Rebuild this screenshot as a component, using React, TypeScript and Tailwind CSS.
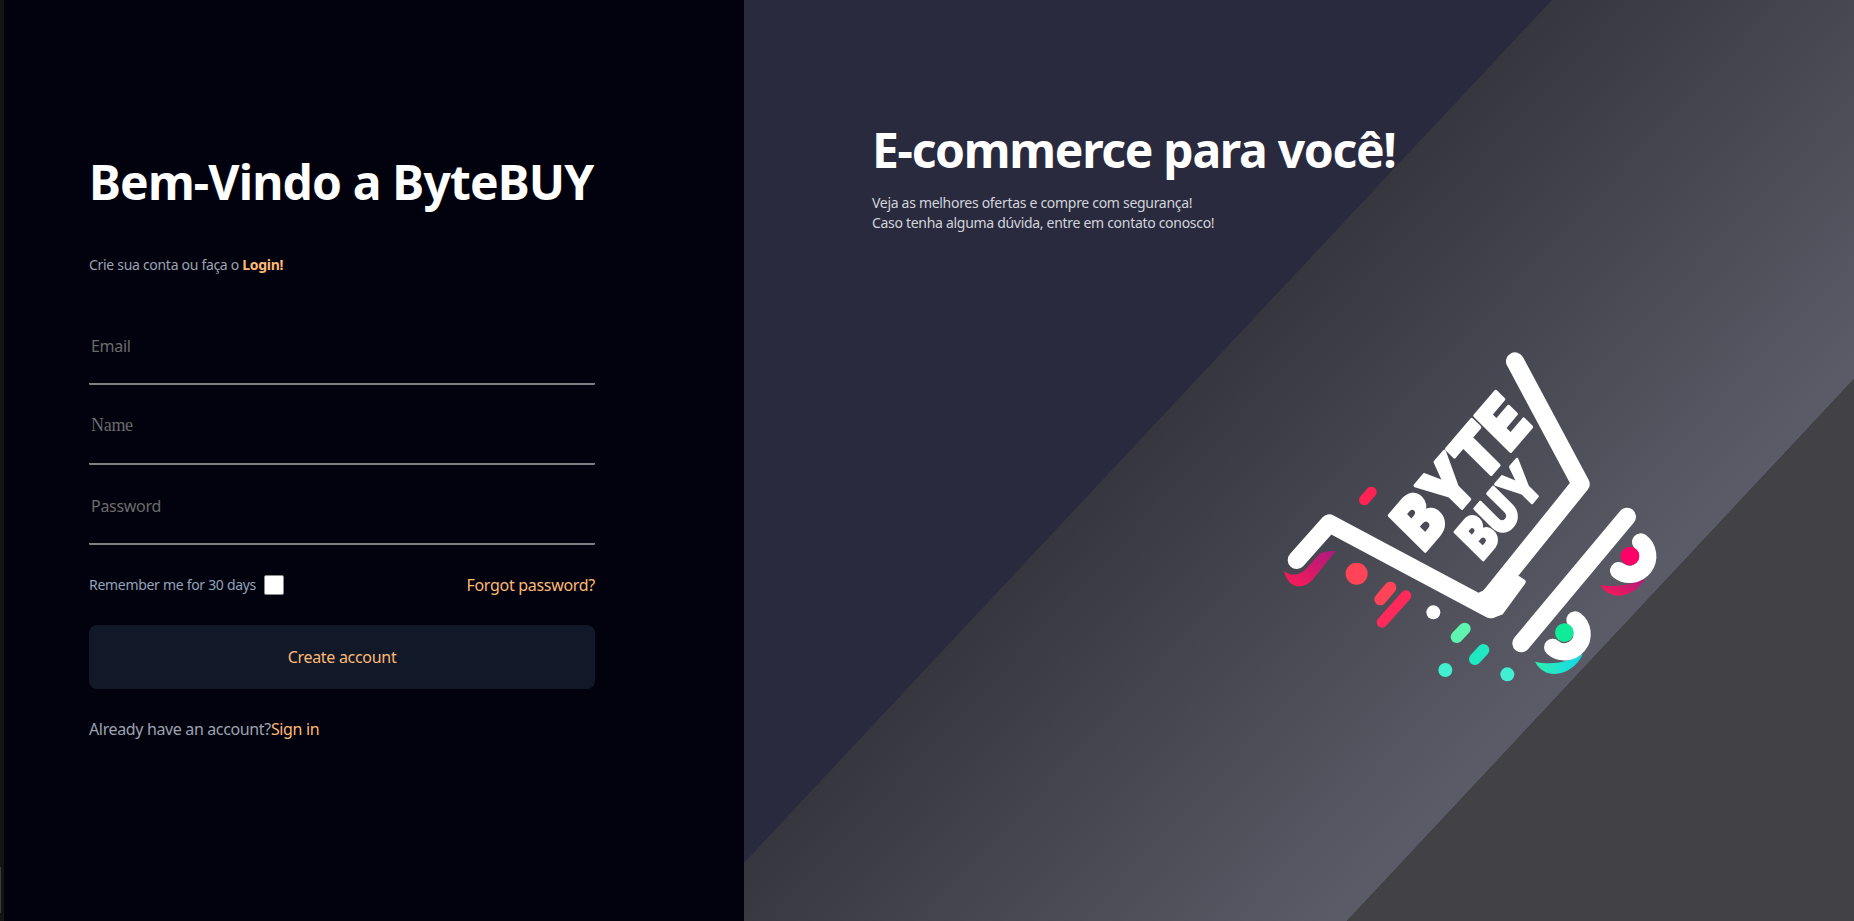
import { Fragment } from 'react';

const fields = [
  { label: 'Email', type: 'email', font: "text-base font-['Noto_Sans',sans-serif]" },
  { label: 'Name', type: 'text', font: "text-[18px] font-['Liberation_Serif',serif]" },
  { label: 'Password', type: 'password', font: "text-base font-['Noto_Sans',sans-serif]" },
];

function Backdrop() {
  return (
    <svg className="absolute inset-0 h-full w-full" viewBox="0 0 1110 921" preserveAspectRatio="none">
      <defs>
        <linearGradient id="band" gradientUnits="userSpaceOnUse" x1="404" y1="431" x2="745" y2="750">
          <stop offset="0" stopColor="#36363f" />
          <stop offset="1" stopColor="#5b5b67" />
        </linearGradient>
      </defs>
      <rect width="1110" height="921" fill="#2a2a3e" />
      <polygon points="808,0 1110,0 1110,379 603,921 0,921 0,863" fill="url(#band)" />
      <polygon points="1110,379 1110,921 603,921" fill="#424145" />
    </svg>
  );
}

// drawn in 3x coordinates, same as the crop it was traced from
function Logo() {
  return (
    <svg className="relative block h-[370px] w-[420px]" viewBox="0 0 1260 1110">
      <defs>
        <linearGradient id="pinkCurl" x1="0" y1="1" x2="1" y2="0">
          <stop offset="0" stopColor="#ff1a55" />
          <stop offset="1" stopColor="#a81a80" />
        </linearGradient>
        <linearGradient id="tealCurl" x1="0" y1="0" x2="1" y2="0">
          <stop offset="0" stopColor="#2ff0b0" />
          <stop offset="1" stopColor="#12d8ea" />
        </linearGradient>
      </defs>

      <path d="M72 722 C90 738 115 738 135 720 L180 670 Q200 662 228 662 L165 740 C135 782 85 780 72 722 Z" fill="url(#pinkCurl)" />
      <path d="M1020 765 C1060 772 1110 768 1156 745 C1135 790 1060 825 1020 765 Z" fill="url(#pinkCurl)" />
      <path d="M825 995 C870 1005 920 1000 968 972 C945 1030 860 1060 825 995 Z" fill="url(#tealCurl)" />

      <g fill="none" stroke="#ffffff" strokeLinecap="round" strokeLinejoin="round">
        <path d="M110 690 L208 580 L692 838" strokeWidth="54" />
        <path d="M765 94 L962 462 L690 800" strokeWidth="54" />
        <path d="M1101 560 L784 940" strokeWidth="54" />
        <path d="M1142 636 A53 53 0 1 1 1076 722" strokeWidth="52" />
        <path d="M945 870 A53 53 0 1 1 878 952" strokeWidth="52" />
      </g>
      <polygon
        points="662,795 772,746 788,756 722,846 700,854"
        fill="#ffffff"
        stroke="#ffffff"
        strokeWidth="18"
        strokeLinejoin="round"
      />

      <circle cx="1110" cy="678" r="28" fill="#ff0066" />
      <circle cx="913" cy="908" r="28" fill="#10eb9a" />
      <circle cx="290" cy="731" r="33" fill="#ff4458" />
      <circle cx="520" cy="847" r="21" fill="#ffffff" />
      <circle cx="556" cy="1020" r="21" fill="#40f0d0" />
      <circle cx="742" cy="1033" r="21" fill="#40f0d0" />

      <g fill="none" strokeLinecap="round">
        <path d="M313 510 L334 486" stroke="#ff2255" strokeWidth="32" />
        <path d="M361 808 L391 773" stroke="#ff4458" strokeWidth="36" />
        <path d="M366 877 L438 797" stroke="#ff2a5a" strokeWidth="32" />
        <path d="M590 921 L614 896" stroke="#5ff5b0" strokeWidth="36" />
        <path d="M645 987 L670 960" stroke="#20e8c0" strokeWidth="36" />
      </g>

      <text
        transform="matrix(0.65 -0.76 0.71 0.70 490 670)"
        textLength="507"
        lengthAdjust="spacingAndGlyphs"
        fontSize="208"
        fontWeight="900"
        fill="#ffffff"
        stroke="#ffffff"
        strokeWidth="10"
        strokeLinejoin="round"
        fontFamily="Inter, sans-serif"
      >
        BYTE
      </text>
      <text
        transform="matrix(0.65 -0.76 0.71 0.70 665 695)"
        textLength="298"
        lengthAdjust="spacingAndGlyphs"
        fontSize="165"
        fontWeight="900"
        fill="#ffffff"
        stroke="#ffffff"
        strokeWidth="8"
        strokeLinejoin="round"
        fontFamily="Inter, sans-serif"
      >
        BUY
      </text>
    </svg>
  );
}

export default function App() {
  return (
    <div className="flex h-screen w-full overflow-hidden font-['Noto_Sans',sans-serif] tracking-[-0.3px]">
      {/* browser edge */}
      <div className="flex w-[4px] shrink-0 flex-col bg-[#141414]">
        <div className="ml-0 mt-[867px] h-[46px] w-[1px] bg-[#3a3a3a]" />
      </div>

      {/* Form */}
      <div className="w-[740px] shrink-0 bg-[#02020f] pl-[85px] pt-[158px]">
        <div className="w-[506px]">
          <h1 className="whitespace-nowrap text-[48px] font-bold leading-[48px] tracking-[-0.85px] text-white">Bem-Vindo a ByteBUY</h1>
          <p className="mt-[49px] text-sm leading-5 text-[#9ca3af]">
            Crie sua conta ou faça o <span className="font-bold text-[#fdba74]">Login!</span>
          </p>

          <form className="mt-[30px]">
            {fields.map((field) => (
              <Fragment key={field.label}>
                <input
                  type={field.type}
                  placeholder={field.label}
                  className={`block h-[80px] w-full rounded-[1px] border-b-2 border-[#808080] bg-transparent px-0.5 pt-[24px] pb-[21px] text-white outline-none placeholder:text-[#6b6b6b] ${field.font}`}
                />
              </Fragment>
            ))}

            <div className="mt-[30px] flex h-5 items-center justify-between">
              <label className="flex items-center gap-[8px] text-sm text-[#94a3b8]">
                Remember me for 30 days
                <span className="h-5 w-5 rounded-[2px] border border-[#8a8a8a] bg-white" />
              </label>
              <a className="text-base text-[#fdba74]">Forgot password?</a>
            </div>

            <button type="button" className="mt-[30px] flex h-16 w-full items-center justify-center rounded-lg bg-[#111827] text-base text-[#fdba74]">
              Create account
            </button>

            <p className="mt-[28px] text-base leading-6 tracking-[-0.36px] text-[#9ca3af]">
              Already have an account?<a className="text-[#fdba74]">Sign in</a>
            </p>
          </form>
        </div>
      </div>

      {/* Banner */}
      <div className="relative flex-1 pl-[128px] pt-[126px]">
        <Backdrop />
        <div className="relative">
          <h2 className="text-[48px] font-bold leading-[48px] tracking-[-1.3px] text-white">E-commerce para você!</h2>
          <p className="mt-[19px] text-sm leading-5 text-[#d1d5db]">
            Veja as melhores ofertas e compre com segurança!
            <br />
            Caso tenha alguma dúvida, entre em contato conosco!
          </p>
        </div>
        <div className="ml-[388px] mt-[97px]">
          <Logo />
        </div>
      </div>
    </div>
  );
}
